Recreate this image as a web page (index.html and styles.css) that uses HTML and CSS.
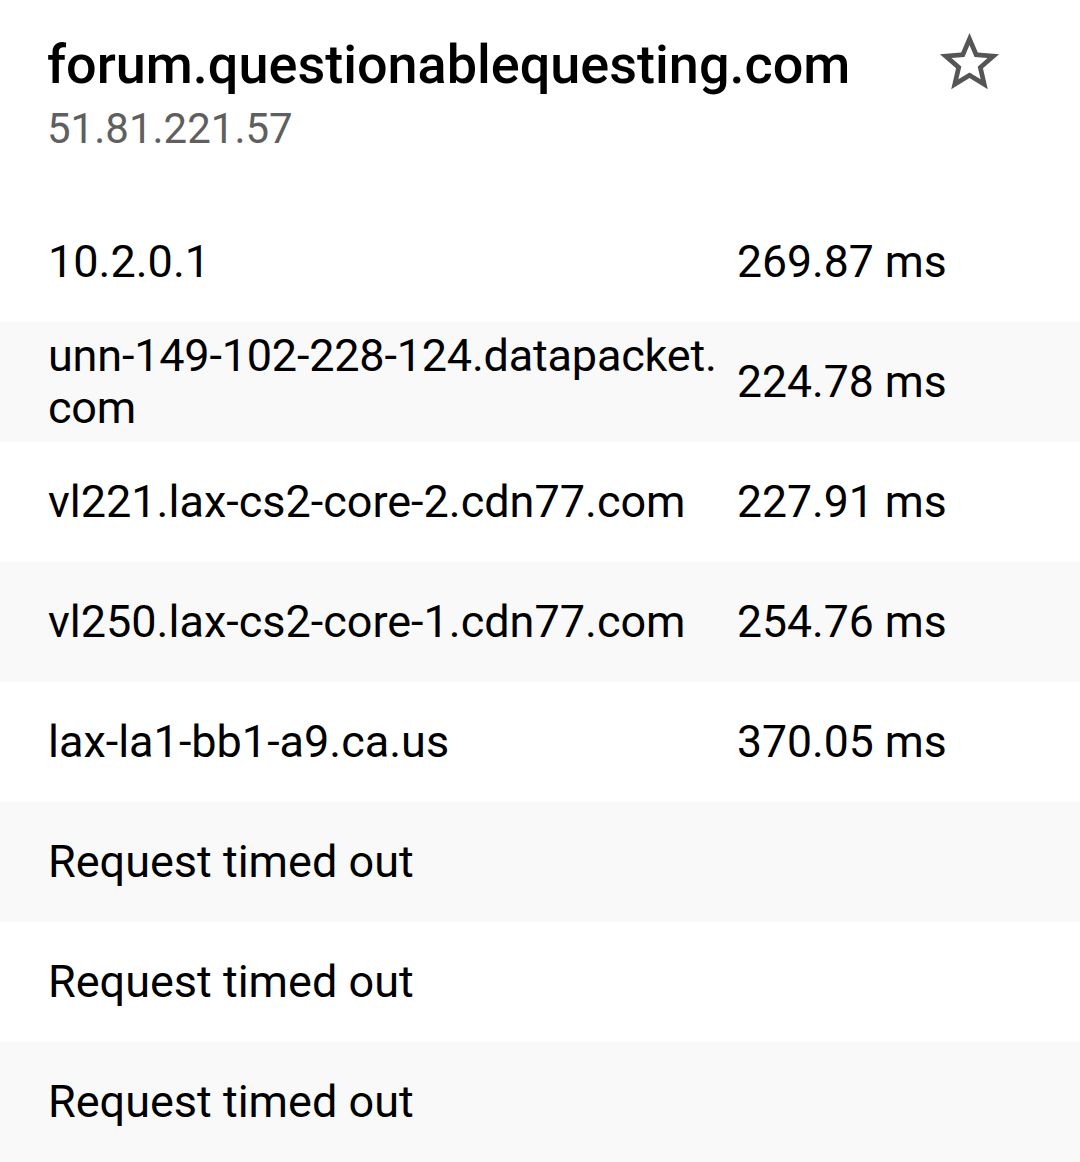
FILE: index.html
```html
<!DOCTYPE html>
<html lang="en">

<head>
    <meta charset="UTF-8">
    <meta name="viewport" content="width=device-width, initial-scale=1.0">
    <title>Traceroute</title>

    <link rel="stylesheet" href="styles.css">
</head>

<body>
    <div class="header">
        <div class="host">
            <h1 class="host-name">forum.questionablequesting.com</h1>
            <p class="host-ip">51.81.221.57</p>
        </div>
        <svg class="star" viewBox="0 0 24 24" width="71" height="71">
            <path fill="#555"
                d="M22 9.24l-7.19-.62L12 2 9.19 8.63 2 9.24l5.46 4.73L5.82 21 12 17.27 18.18 21l-1.63-7.03L22 9.24zM12 15.4l-3.76 2.27 1-4.28-3.32-2.88 4.38-.38L12 6.1l1.71 4.04 4.38.38-3.32 2.88 1 4.28L12 15.4z" />
        </svg>
    </div>

    <div class="hops">
        <div class="hop">
            <span class="hop-host">10.2.0.1</span>
            <span class="hop-time">269.87 ms</span>
        </div>
        <div class="hop">
            <span class="hop-host tight">unn-149-102-228-124.datapacket.<br>com</span>
            <span class="hop-time">224.78 ms</span>
        </div>
        <div class="hop">
            <span class="hop-host">vl221.lax-cs2-core-2.cdn77.com</span>
            <span class="hop-time">227.91 ms</span>
        </div>
        <div class="hop">
            <span class="hop-host">vl250.lax-cs2-core-1.cdn77.com</span>
            <span class="hop-time">254.76 ms</span>
        </div>
        <div class="hop">
            <span class="hop-host">lax-la1-bb1-a9.ca.us</span>
            <span class="hop-time">370.05 ms</span>
        </div>
        <div class="hop">
            <span class="hop-host">Request timed out</span>
        </div>
        <div class="hop">
            <span class="hop-host">Request timed out</span>
        </div>
        <div class="hop">
            <span class="hop-host">Request timed out</span>
        </div>
    </div>
</body>

</html>
```

FILE: styles.css
```css
body {
    margin: 0;
    background-color: #fff;
    font-family: Roboto, "Liberation Sans", sans-serif;
    color: #000;
}

.header {
    display: flex;
    justify-content: space-between;
    align-items: flex-start;
    padding: 34px 75px 0 47px;
    height: 202px;
    box-sizing: border-box;
}

.host-name {
    margin: 0;
    font-size: 54px;
    font-weight: 500;
    line-height: 62px;
}

.host-ip {
    margin: 0;
    font-size: 42px;
    color: #5f5f5f;
    line-height: 65px;
}

.star {
    margin-top: -7px;
}

.hop {
    display: flex;
    align-items: center;
    height: 120px;
    padding-left: 48px;
}

.hop:nth-child(even) {
    background-color: #f9f9f9;
}

.hop-host {
    width: 689px;
    font-size: 45px;
    line-height: 52px;
    white-space: nowrap;
}

.tight {
    letter-spacing: -0.2px;
}

.hop-time {
    font-size: 44.5px;
}
```
